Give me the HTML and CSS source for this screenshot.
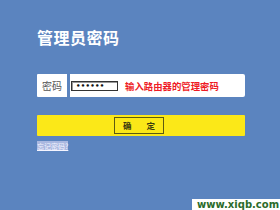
FILE: index.html
```html
<!DOCTYPE html>
<html>
<head>
<meta charset="utf-8">
<link rel="stylesheet" href="styles.css">
</head>
<body>
<div class="page">
  <h1 class="title">管理员密码</h1>
  <div class="row">
    <div class="label">密码</div>
    <div class="field">
      <div class="pwd">••••••</div>
      <div class="hint">输入路由器的管理密码</div>
    </div>
  </div>
  <div class="btnbar">
    <div class="btn"><span>确</span><span>定</span></div>
  </div>
  <div class="forgot"><span>忘记密码?</span></div>
</div>
<div class="mark">www.xiqb.com</div>
</body>
</html>
```
FILE: styles.css
```css
html, body {
  margin: 0;
  padding: 0;
  width: 280px;
  height: 210px;
  overflow: hidden;
  background: #5b84bf;
  font-family: "Noto Sans CJK SC", "Liberation Sans", sans-serif;
}
body {
  position: relative;
}
.page {
  padding: 29px 0 0 37px;
  width: 208px;
}
.title {
  margin: 0;
  font-size: 16px;
  line-height: 16px;
  font-weight: bold;
  color: #ffffff;
  letter-spacing: 0.5px;
}
.row {
  margin-top: 29px;
  height: 23px;
  display: flex;
  gap: 3px;
}
.label {
  width: 30px;
  background: #fff;
  color: #555;
  font-size: 10px;
  line-height: 23px;
  text-align: center;
  border-radius: 1px 0 0 1px;
}
.field {
  flex: 1;
  background: #fff;
  display: flex;
  align-items: center;
  padding-left: 1px;
  border-radius: 0 2px 2px 0;
}
.pwd {
  width: 41px;
  height: 8px;
  border: 1px solid #333;
  box-shadow: inset 1px 1px 0 #999;
  font-family: "DejaVu Sans", sans-serif;
  font-size: 7px;
  font-weight: bold;
  line-height: 8px;
  letter-spacing: 0.3px;
  padding-left: 4px;
  box-sizing: content-box;
  color: #111;
  overflow: hidden;
}
.hint {
  margin-left: 7px;
  color: #ee1b24;
  font-size: 9.4px;
  font-weight: bold;
  line-height: 10px;
}
.btnbar {
  margin-top: 18px;
  height: 21px;
  background: #fbe818;
  display: flex;
  justify-content: center;
  align-items: center;
  border-radius: 1px;
}
.btn {
  margin-left: -4px;
  width: 48px;
  height: 15px;
  border: 1px solid #5e5a10;
  font-size: 8.5px;
  line-height: 15px;
  color: #3a3a10;
  font-weight: bold;
  display: flex;
  justify-content: center;
  gap: 15px;
}
.forgot {
  margin-top: 6px;
  font-size: 7px;
  line-height: 8px;
}
.forgot span {
  background: #aab8e0;
  color: #f4f4ff;
  text-decoration: underline;
}
.mark {
  position: absolute;
  left: 192px;
  top: 199px;
  width: 88px;
  height: 11px;
  box-sizing: border-box;
  overflow: hidden;
  white-space: nowrap;
  background: #fff;
  color: #2b6b2b;
  font-family: "DejaVu Sans", sans-serif;
  font-weight: bold;
  font-size: 10px;
  line-height: 12px;
  padding-left: 5px;
}
```
